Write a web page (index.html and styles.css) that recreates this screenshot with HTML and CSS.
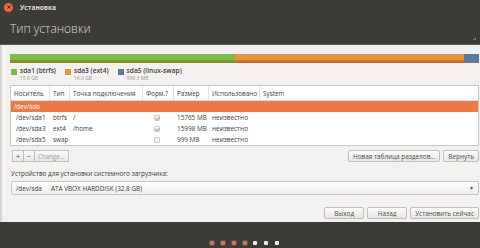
FILE: index.html
```html
<!DOCTYPE html>
<html lang="ru">
  <head>
    <meta charset="UTF-8" />
    <title>Установка</title>
    <link rel="stylesheet" href="styles.css">
  </head>
  <body>
    <div class="window">
      <div class="titlebar">
        <span class="close-btn">
          <svg width="8" height="8" viewBox="0 0 8 8"><path d="M2.5 2.5 L5.5 5.5 M5.5 2.5 L2.5 5.5" stroke="#4a2a1a" stroke-width="1"/></svg>
        </span>
        <span class="title">Установка</span>
      </div>
      <div class="header">
        <h1>Тип установки</h1>
        <span class="grip"></span>
      </div>

      <main class="content">
        <div class="part-bar">
          <span class="seg green" style="width: 225px"></span>
          <span class="seg orange" style="width: 229px"></span>
          <span class="seg blue"></span>
        </div>

        <div class="legend">
          <div class="legend-item">
            <span class="swatch green"></span>
            <div>
              <div class="legend-name">sda1 (btrfs)</div>
              <div class="legend-size">15.8 GB</div>
            </div>
          </div>
          <div class="legend-item">
            <span class="swatch orange"></span>
            <div>
              <div class="legend-name">sda3 (ext4)</div>
              <div class="legend-size">16.0 GB</div>
            </div>
          </div>
          <div class="legend-item">
            <span class="swatch blue"></span>
            <div>
              <div class="legend-name">sda5 (linux-swap)</div>
              <div class="legend-size">999.3 MB</div>
            </div>
          </div>
        </div>

        <div class="table">
          <div class="row head">
            <span>Носитель</span><span>Тип</span><span>Точка подключения</span><span>Форм.?</span><span>Размер</span><span>Использовано</span><span>System</span>
          </div>
          <div class="row selected">
            <span>/dev/sda</span>
          </div>
          <div class="row">
            <span class="dev">/dev/sda1</span><span>btrfs</span><span>/</span><span class="chk-cell"><i class="chk on"></i></span><span>15765 MB</span><span>неизвестно</span><span></span>
          </div>
          <div class="row">
            <span class="dev">/dev/sda3</span><span>ext4</span><span>/home</span><span class="chk-cell"><i class="chk on"></i></span><span>15998 MB</span><span>неизвестно</span><span></span>
          </div>
          <div class="row">
            <span class="dev">/dev/sda5</span><span>swap</span><span></span><span class="chk-cell"><i class="chk"></i></span><span class="size-sm">999 MB</span><span>неизвестно</span><span></span>
          </div>
        </div>

        <div class="tools">
          <div class="btn-group">
            <span class="btn tiny">+</span>
            <span class="btn tiny">−</span>
            <span class="btn tiny dim">Change...</span>
          </div>
          <div class="tools-right">
            <span class="btn">Новая таблица разделов...</span>
            <span class="btn">Вернуть</span>
          </div>
        </div>

        <div class="boot-label">Устройство для установки системного загрузчика:</div>
        <div class="combo">
          <span class="combo-dev">/dev/sda</span>
          <span>ATA VBOX HARDDISK (32.8 GB)</span>
          <span class="combo-arrow">▾</span>
        </div>

        <div class="actions">
          <span class="btn wide">Выход</span>
          <span class="btn wide">Назад</span>
          <span class="btn">Установить сейчас</span>
        </div>
      </main>

      <div class="footer">
        <span class="dot done"></span>
        <span class="dot done"></span>
        <span class="dot done"></span>
        <span class="dot done"></span>
        <span class="dot"></span>
        <span class="dot"></span>
        <span class="dot"></span>
      </div>
    </div>
  </body>
</html>
```

FILE: styles.css
```css
* {
  box-sizing: border-box;
}
body {
  margin: 0;
  background-color: #3c3b37;
  font-family: "Open Sans", "DejaVu Sans", sans-serif;
  color: #3c3c3c;
}
.window {
  width: 480px;
  height: 248px;
  display: flex;
  flex-direction: column;
}
.titlebar {
  height: 14px;
  display: flex;
  align-items: center;
  padding-left: 4px;
  gap: 7px;
}
.close-btn {
  width: 9px;
  height: 9px;
  border-radius: 50%;
  background-color: #e9683c;
  display: flex;
  align-items: center;
  justify-content: center;
}
.title {
  font-size: 6.6px;
  font-weight: bold;
  color: #dfdbd2;
}
.header {
  height: 31px;
  display: flex;
  align-items: center;
  justify-content: space-between;
  padding: 0 4px 2px 10px;
  border-bottom: 1px solid #5c5b56;
}
h1 {
  margin: 0;
  font-size: 12px;
  font-weight: 300;
  color: #dfdbd2;
}
.grip {
  width: 3px;
  height: 3px;
  margin-top: 20px;
  border-right: 1px solid #77756f;
  border-bottom: 1px solid #77756f;
}
.content {
  height: 177px;
  background-color: #f2f1f0;
  border-left: 2px solid #d6d4cf;
  padding: 9px 1px 0 8px;
  display: flex;
  flex-direction: column;
}
.part-bar {
  display: flex;
  height: 9px;
  border-bottom: 1px solid #a07040;
}
.seg {
  height: 100%;
}
.seg.blue {
  flex: 1;
}
.green {
  background-color: #80bd3e;
}
.orange {
  background-color: #e9953a;
}
.blue {
  background-color: #5878a8;
}
.part-bar .green {
  border-bottom: 2px solid #69a030;
}
.part-bar .orange {
  border-bottom: 2px solid #c87a2a;
}
.legend {
  display: flex;
  gap: 9px;
  margin-top: 3px;
  padding-left: 1px;
}
.legend-item {
  display: flex;
  gap: 3px;
}
.swatch {
  width: 6px;
  height: 6px;
  margin-top: 3px;
}
.legend-name {
  font-size: 6.6px;
  font-weight: 600;
  color: #3c3c3c;
  line-height: 9px;
}
.legend-size {
  font-size: 5px;
  color: #9a9894;
  line-height: 6px;
}
.table {
  margin-top: 4px;
  background-color: #fff;
  border: 1px solid #c9c6c0;
  font-size: 6.4px;
}
.row {
  display: grid;
  grid-template-columns: 39px 20px 73px 31px 35px 51px 1fr;
  height: 11px;
  align-items: center;
}
.row span {
  padding-left: 3px;
  white-space: nowrap;
  overflow: hidden;
}
.row.head {
  height: 15px;
  border-bottom: 1px solid #e0ddd8;
}
.row.head span {
  border-right: 1px solid #e6e3de;
  height: 100%;
  display: flex;
  align-items: center;
}
.row.head span:last-child {
  border-right: none;
}
.row.selected {
  background-color: #ef7847;
  color: #fff;
  display: block;
  line-height: 11px;
}
.row .dev {
  padding-left: 5px;
}
.chk-cell {
  display: flex;
  justify-content: center;
  padding-right: 6px;
}
.chk {
  display: block;
  width: 6px;
  height: 6px;
  border: 1px solid #d0cec9;
  border-radius: 1px;
  background-color: #f4f3f1;
  position: relative;
}
.chk.on::after {
  content: "";
  position: absolute;
  left: 1px;
  top: 0;
  width: 2px;
  height: 3px;
  border-right: 1px solid #a8a6a2;
  border-bottom: 1px solid #a8a6a2;
  transform: rotate(40deg);
}
.size-sm {
  padding-left: 3px;
}
.tools {
  display: flex;
  justify-content: space-between;
  align-items: center;
  margin-top: 4px;
  height: 12px;
}
.btn-group {
  display: flex;
  margin-left: 2px;
}
.btn {
  display: flex;
  align-items: center;
  justify-content: center;
  height: 12px;
  padding: 0 4px;
  font-size: 6.4px;
  color: #4c4c4c;
  background: linear-gradient(#fbfbfa, #e8e6e3);
  border: 1px solid #c2bfb9;
  border-radius: 2px;
}
.btn.tiny {
  border-radius: 0;
  padding: 0 3px;
  margin-right: -1px;
  font-size: 7px;
}
.btn.tiny.dim {
  font-size: 6.2px;
  color: #a5a29d;
  margin-right: 0;
}
.tools-right {
  display: flex;
  gap: 3px;
}
.boot-label {
  margin-top: 7px;
  padding-left: 1px;
  font-size: 6.4px;
  color: #3c3c3c;
}
.combo {
  margin-top: 3px;
  margin-left: 1px;
  height: 14px;
  display: flex;
  align-items: center;
  gap: 9px;
  padding: 0 5px 0 4px;
  font-size: 6.4px;
  background: linear-gradient(#fdfdfc, #efeeec);
  border: 1px solid #c9c6c0;
  border-radius: 2px;
}
.combo-arrow {
  margin-left: auto;
  font-size: 6px;
  color: #555;
}
.actions {
  display: flex;
  justify-content: flex-end;
  gap: 3px;
  margin-top: 12px;
}
.btn.wide {
  width: 40px;
}
.footer {
  flex: 1;
  display: flex;
  justify-content: center;
  align-items: flex-end;
  gap: 6.7px;
  padding: 0 0 3px 9px;
}
.dot {
  width: 4px;
  height: 4px;
  background-color: #ecebe8;
  border-radius: 1px;
}
.dot.done {
  background-color: #c9785a;
  box-shadow: 0 0 0 1px #7a4a38;
}
```
